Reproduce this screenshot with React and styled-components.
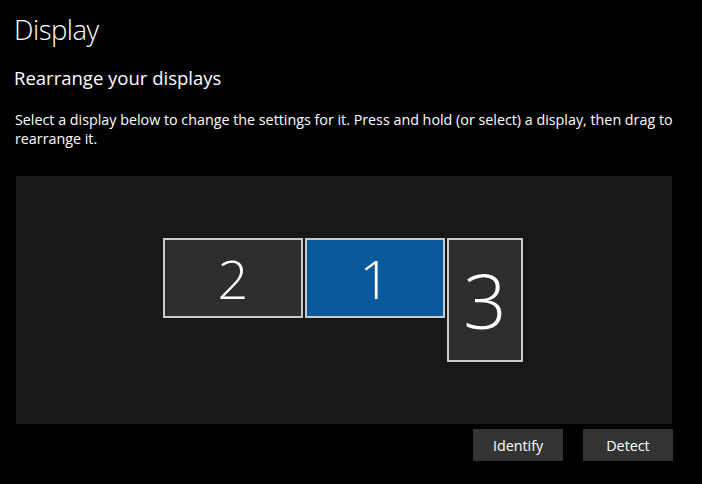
import React from "react";
import styled, { createGlobalStyle } from "styled-components";

const Global = createGlobalStyle`
  html, body { margin: 0; padding: 0; background: #000; }
  body { font-family: "Open Sans", "Noto Sans", sans-serif; color: #fff; }
`;

const Page = styled.div`
  width: 702px;
  height: 484px;
  box-sizing: border-box;
  padding: 0 0 0 14px;
  display: flex;
  flex-direction: column;
  overflow: hidden;
`;

const Title = styled.h1`
  margin: 11px 0 0 0;
  font-size: 27.5px;
  line-height: 38px;
  font-weight: 300;
  letter-spacing: -0.5px;
`;

const Subtitle = styled.h2`
  margin: 16px 0 0 0;
  font-size: 18.5px;
  line-height: 26px;
  font-weight: 400;
`;

const Description = styled.p`
  margin: 19px 0 0 1px;
  width: 684px;
  font-size: 14.3px;
  line-height: 19px;
  font-weight: 400;
`;

const Canvas = styled.div`
  position: relative;
  margin: 28px 0 0 2px;
  width: 656px;
  height: 248px;
  background: #171717;
`;

const Monitor = styled.div`
  position: absolute;
  box-sizing: border-box;
  border: 2px solid #c9c9c9;
  background: ${(p) => (p.$active ? "#085a9c" : "#2d2d2d")};
  display: flex;
  align-items: center;
  justify-content: center;
  font-weight: 300;
  font-size: ${(p) => p.$size}px;
  line-height: 1;
  color: #fff;
`;

const Actions = styled.div`
  display: flex;
  justify-content: flex-end;
  gap: 20px;
  width: 659px;
  margin-top: 5px;
`;

const Button = styled.button`
  width: 90px;
  height: 32px;
  border: none;
  background: #333333;
  color: #fff;
  font-family: "Open Sans", "Noto Sans", sans-serif;
  font-size: 14.3px;
  padding: 0;
`;

const monitors = [
  { id: 2, x: 147, y: 62, w: 140, h: 80, size: 54 },
  { id: 1, x: 289, y: 62, w: 140, h: 80, size: 54, active: true },
  { id: 3, x: 431, y: 62, w: 76, h: 124, size: 76 },
];

export default function App() {
  return (
    <>
      <Global />
      <Page>
        <Title>Display</Title>
        <Subtitle>Rearrange your displays</Subtitle>
        <Description>
          Select a display below to change the settings for it. Press and hold (or select) a display, then drag to
          rearrange it.
        </Description>
        <Canvas>
          {monitors.map((m) => (
            <Monitor
              key={m.id}
              $active={m.active}
              $size={m.size}
              style={{ left: m.x, top: m.y, width: m.w, height: m.h }}
            >
              {m.id}
            </Monitor>
          ))}
        </Canvas>
        <Actions>
          <Button>Identify</Button>
          <Button>Detect</Button>
        </Actions>
      </Page>
    </>
  );
}
